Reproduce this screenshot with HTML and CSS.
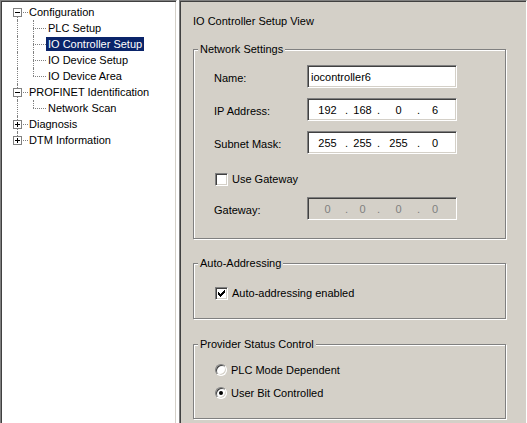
FILE: index.html
```html
<!DOCTYPE html>
<html>
<head>
<meta charset="utf-8">
<title>IO Controller Setup View</title>
<link rel="stylesheet" href="styles.css">
</head>
<body>
<div class="tree">
  <div class="row">
    <span class="conn root first"><span class="exp"></span></span>
    <span class="label">Configuration</span>
  </div>
  <div class="row">
    <span class="pipe"></span><span class="conn child"></span>
    <span class="label sub">PLC Setup</span>
  </div>
  <div class="row">
    <span class="pipe"></span><span class="conn child"></span>
    <span class="label sub selected">IO Controller Setup</span>
  </div>
  <div class="row">
    <span class="pipe"></span><span class="conn child"></span>
    <span class="label sub">IO Device Setup</span>
  </div>
  <div class="row">
    <span class="pipe"></span><span class="conn child last"></span>
    <span class="label sub">IO Device Area</span>
  </div>
  <div class="row">
    <span class="conn root"><span class="exp"></span></span>
    <span class="label">PROFINET Identification</span>
  </div>
  <div class="row">
    <span class="pipe"></span><span class="conn child last"></span>
    <span class="label sub">Network Scan</span>
  </div>
  <div class="row">
    <span class="conn root"><span class="exp plus"></span></span>
    <span class="label">Diagnosis</span>
  </div>
  <div class="row">
    <span class="conn root last"><span class="exp plus"></span></span>
    <span class="label">DTM Information</span>
  </div>
</div>
<div class="splitter"></div>
<div class="view">
  <div class="view-title">IO Controller Setup View</div>

  <div class="group network">
    <span class="group-title">Network Settings</span>
    <div class="field">
      <span class="field-label">Name:</span>
      <div class="textbox">iocontroller6</div>
    </div>
    <div class="field">
      <span class="field-label">IP Address:</span>
      <div class="textbox ip">
        <span class="oct o1">192</span><span class="dot">.</span><span class="oct o2">168</span><span class="dot">.</span><span class="oct o3">0</span><span class="dot">.</span><span class="oct o4">6</span>
      </div>
    </div>
    <div class="field">
      <span class="field-label">Subnet Mask:</span>
      <div class="textbox ip">
        <span class="oct o1">255</span><span class="dot">.</span><span class="oct o2">255</span><span class="dot">.</span><span class="oct o3">255</span><span class="dot">.</span><span class="oct o4">0</span>
      </div>
    </div>
    <div class="option gateway-option">
      <span class="check"></span>
      <span>Use Gateway</span>
    </div>
    <div class="field">
      <span class="field-label">Gateway:</span>
      <div class="textbox ip disabled">
        <span class="oct o1">0</span><span class="dot">.</span><span class="oct o2">0</span><span class="dot">.</span><span class="oct o3">0</span><span class="dot">.</span><span class="oct o4">0</span>
      </div>
    </div>
  </div>

  <div class="group auto">
    <span class="group-title">Auto-Addressing</span>
    <div class="option">
      <span class="check"><svg width="11" height="11" viewBox="0 0 11 11" shape-rendering="crispEdges"><path d="M2 4h1v3h-1z M3 5h1v3h-1z M4 6h1v3h-1z M5 5h1v3h-1z M6 4h1v3h-1z M7 3h1v3h-1z M8 2h1v3h-1z" fill="#000"/></svg></span>
      <span>Auto-addressing enabled</span>
    </div>
  </div>

  <div class="group provider">
    <span class="group-title">Provider Status Control</span>
    <div class="option">
      <span class="radio"></span>
      <span>PLC Mode Dependent</span>
    </div>
    <div class="option">
      <span class="radio on"></span>
      <span>User Bit Controlled</span>
    </div>
  </div>
</div>
</body>
</html>
```

FILE: styles.css
```css
* { box-sizing: border-box; }
html, body { margin: 0; padding: 0; }
body {
  width: 527px;
  height: 423px;
  overflow: hidden;
  display: flex;
  background: #d4d0c8;
  font-family: "Liberation Sans", Arial, sans-serif;
  font-size: 11px;
  color: #000;
}

/* ---------- tree ---------- */
.tree {
  flex: none;
  width: 177px;
  height: 440px;
  background: #fff;
  border: 1px solid;
  border-color: #808080 #fff #fff #808080;
  box-shadow: inset 1px 1px 0 #404040, inset -1px -1px 0 #d4d0c8;
  padding: 3px 0 0 8px;
}
.row {
  display: flex;
  align-items: center;
  height: 16px;
  white-space: nowrap;
}
.pipe, .conn {
  position: relative;
  flex: none;
  height: 16px;
}
.pipe { width: 16px; }
.conn.root { width: 19px; }
.conn.child { width: 21px; }
.pipe::before, .conn::before {
  content: "";
  position: absolute;
  left: 8px;
  top: 0;
  bottom: 0;
  border-left: 1px dotted #808080;
}
.conn::after {
  content: "";
  position: absolute;
  left: 8px;
  right: 0;
  top: 8px;
  border-top: 1px dotted #808080;
}
.conn.first::before { top: 8px; }
.conn.last::before { bottom: 8px; }
.exp {
  position: absolute;
  z-index: 1;
  left: 4px;
  top: 4px;
  width: 9px;
  height: 9px;
  background: #fff;
  border: 1px solid #808080;
}
.exp::before {
  content: "";
  position: absolute;
  left: 1px;
  top: 3px;
  width: 5px;
  height: 1px;
  background: #000;
}
.exp.plus::after {
  content: "";
  position: absolute;
  left: 3px;
  top: 1px;
  width: 1px;
  height: 5px;
  background: #000;
}
.label {
  height: 14px;
  line-height: 14px;
  padding: 0 1px;
}
.label.sub { padding: 0 2px; }
.label.selected {
  background: #0a246a;
  color: #fff;
}

.splitter {
  flex: none;
  width: 2px;
  height: 440px;
  background: #fff;
}

/* ---------- view ---------- */
.view {
  flex: 1;
  height: 440px;
  border: 1px solid;
  border-color: #808080 #fff #fff #808080;
  box-shadow: inset 1px 1px 0 #404040, inset -1px -1px 0 #d4d0c8;
  padding: 14px 20px 0 13px;
  display: flex;
  flex-direction: column;
}
.view-title {
  height: 13px;
  line-height: 13px;
  margin-bottom: 21px;
}
.group {
  position: relative;
  flex: none;
  border: 1px solid #808080;
  box-shadow: inset 1px 1px 0 #fff, 1px 1px 0 #fff;
  padding: 0 0 17px 20px;
  display: flex;
  flex-direction: column;
}
.group-title {
  position: absolute;
  left: 4px;
  top: -7px;
  padding: 0 2px;
  height: 13px;
  line-height: 13px;
  background: #d4d0c8;
}
.group.network {
  padding-top: 15px;
  padding-bottom: 18px;
  gap: 10px;
}
.group.network .gateway-option { margin-top: 7px; }
.group.auto {
  margin-top: 24px;
  padding-top: 21px;
}
.group.provider {
  margin-top: 25px;
  padding-top: 17px;
  gap: 7px;
}

.field {
  display: flex;
  align-items: center;
  height: 23px;
}
.field-label {
  width: 93px;
  padding-top: 3px;
}
.textbox {
  width: 150px;
  height: 23px;
  background: #fff;
  border: 1px solid;
  border-color: #808080 #fff #fff #808080;
  box-shadow: inset 1px 1px 0 #404040, inset -1px -1px 0 #d4d0c8;
  padding: 0 3px;
  display: flex;
  align-items: center;
  white-space: nowrap;
}
.textbox.ip { padding: 0 0 0 2px; }
.textbox.disabled {
  background: #d4d0c8;
  color: #808080;
}
.oct { text-align: center; flex: none; }
.o1 { width: 35px; }
.o2 { width: 29px; }
.o3 { width: 37px; }
.o4 { width: 30px; }
.dot { width: 3px; flex: none; text-align: center; }

.option {
  display: flex;
  align-items: center;
  height: 16px;
  gap: 4px;
  padding-left: 1px;
  white-space: nowrap;
}
.check {
  flex: none;
  width: 13px;
  height: 13px;
  background: #fff;
  border: 1px solid;
  border-color: #808080 #fff #fff #808080;
  box-shadow: inset 1px 1px 0 #404040, inset -1px -1px 0 #d4d0c8;
}
.check svg { display: block; }
.radio {
  flex: none;
  position: relative;
  width: 12px;
  height: 12px;
  border-radius: 50%;
  background: #fff;
  border: 1px solid;
  border-color: #808080 #fff #fff #808080;
  box-shadow: inset 1px 1px 0 #404040, inset -1px -1px 0 #d4d0c8;
}
.radio.on::after {
  content: "";
  position: absolute;
  left: 3px;
  top: 3px;
  width: 4px;
  height: 4px;
  border-radius: 50%;
  background: #000;
}
```
